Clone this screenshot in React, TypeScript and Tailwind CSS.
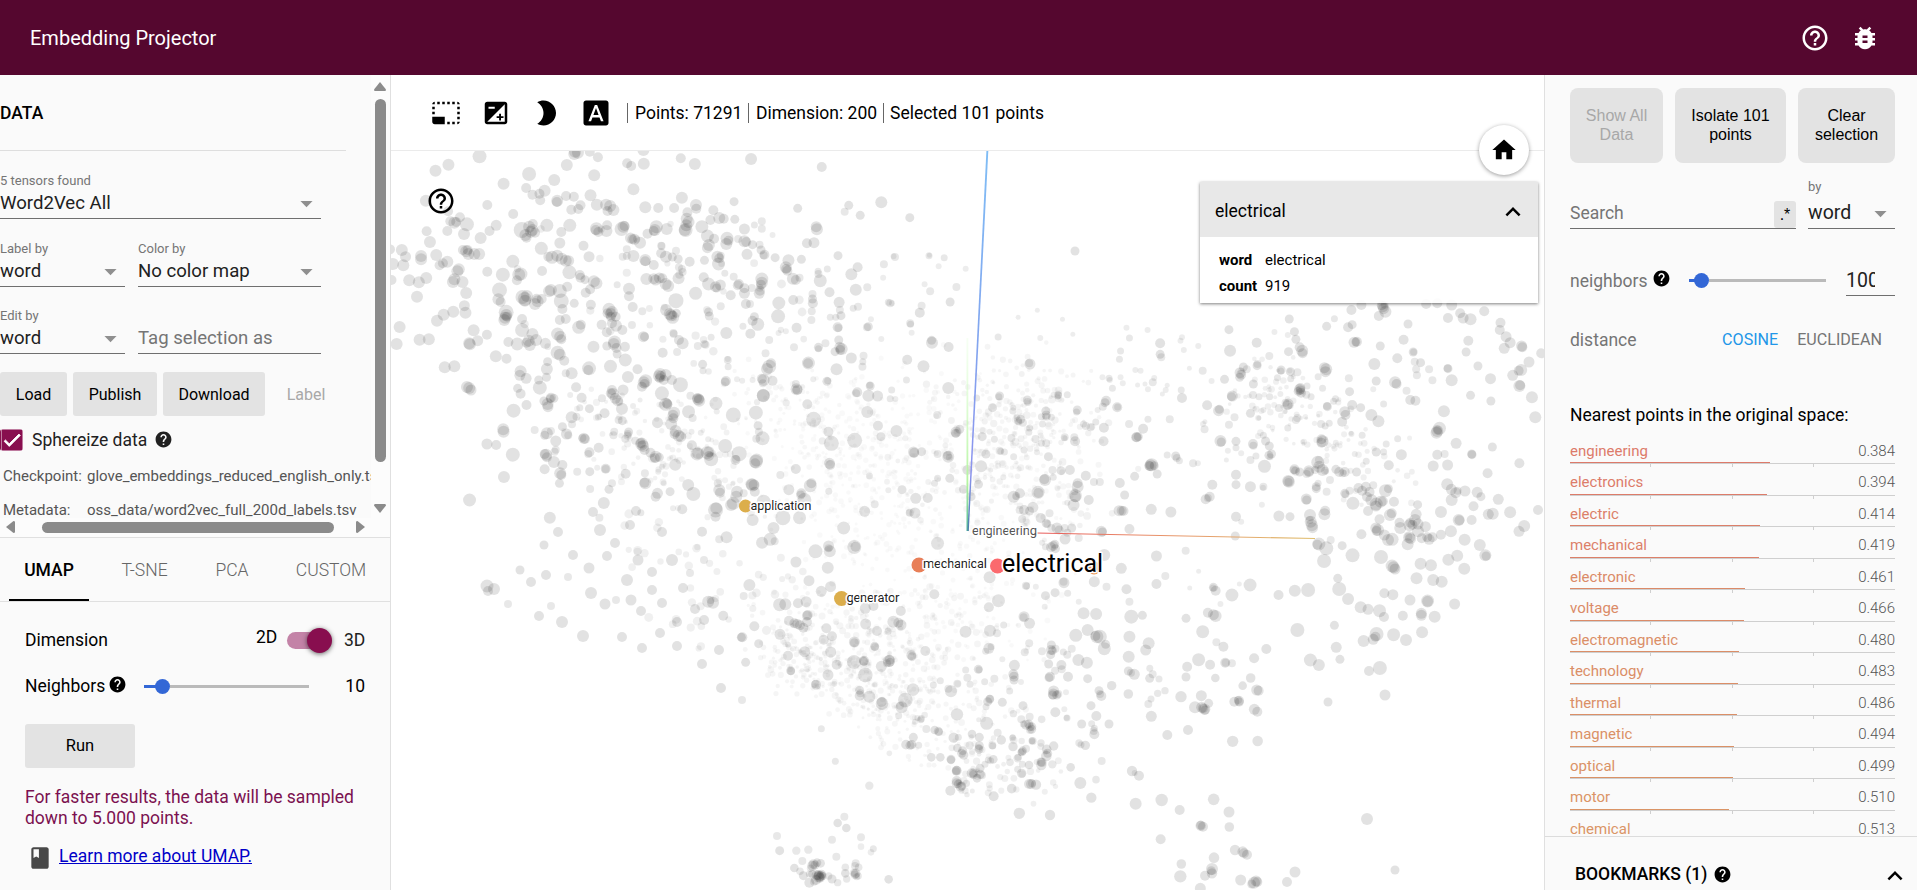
import type { ReactNode } from 'react';
import {
  MdArrowDropDown,
  MdBook,
  MdBrightness2,
  MdBugReport,
  MdCheck,
  MdExposure,
  MdFontDownload,
  MdHelp,
  MdHelpOutline,
  MdHome,
  MdKeyboardArrowUp,
  MdPhotoSizeSelectSmall,
} from 'react-icons/md';

type Dot = { x: number; y: number; r: number; o: number };

/** A batch of projected points: "x y r" triples in units of the batch's own grid. */
type Batch = { ox: number; oy: number; sx: number; sy: number; data: string };

const batches: Batch[] = [
  {
    ox: 390, oy: 150, sx: 2.703, sy: 3,
    data: `242 19 7 158 44 6 123 62 6 500 5 6 508 8 6 498 12 6 540 5 5 562 22 5 478 45 6 376 72 7 307 101 6 444 90 6 552 76 6 685 0 6 686 41 6 641 40 5 652 48 5 786 25 5 824 42 6 976 27 6 1167 51 5 658 118 6 97 152 6 157 184 5 368 114 5 418 122 6 385 134 5 404 131 5 406 151 5 452 152 6 451 156 5 476 138 5 497 140 5 542 136 6 559 164 6 584 164 6 595 168 6 604 180 6 588 183 5 490 179 5 515 166 5 509 177 5 263 165 5 333 192 5 690 172 6 725 174 5 789 143 6 768 174 5 827 165 6 828 176 5 804 187 5 874 181 5 930 155 4.5 1102 175 4.5 1240 166 4.5 1229 185 4 1271 196 4.5 1328 157 6 1405 203 4.5 1152 230 5.5 1154 238 6 1146 278 5.5 1127 280 5
189 202 5 174 218 6 179 216 5 208 223 7 163 214 5 155 243 5 200 252 6 287 226 5.5 269 243 5 99 244 5 108 276 6 245 264 6 125 315 6 84 318 6 84 328 6 32 300 6 42 320 5.5 36 346 6 8 342 6 0 298 5 4 390 5 52 391 6 78 397 6 98 384 6 155 335 6 143 340 5 134 346 5 206 304 6 212 312 6 228 312 6 241 312 6 197 300 5 210 300 5 186 358 6 182 364 6 174 388 6 196 396 6 170 396 6 206 429 6 201 467 5.5 204 488 6 171 485 6 145 494 6 127 512 6 73 440 6 26 531 6 18 582 6 80 569 6 105 568 6 226 541 6 262 554 5 214 580 6 216 583 6 237 572 5.5 148 652 6 174 649 6 286 619 6 315 626 5 208 711 6 214 714 6 219 720 5.5 345 715 4.5 353 731 5 405 713 7 334 782 7 369 765 5 306 838 6 307 845 6 262 882 5.5 287 885 5 332 914 7 308 981 6 215 1050 6.5
356 240 8 376 230 6 385 240 6 381 245 6 366 255 6 369 263 5 392 248 5 386 222 5 424 226 6.5 463 246 5 486 226 6.5 459 279 5.5 409 295 6.5 523 287 5 538 320 5.5 558 236 6.5 563 246 5 556 240 5 585 243 6 587 226 5 626 237 7 631 230 6 634 228 5 650 264 5.5 661 268 5.5 655 268 5 676 278 6 720 230 6.5 716 240 6 713 243 5 748 237 6 696 251 5 802 206 6 807 216 6 801 226 6 799 240 7 797 240 6 843 230 6.5 858 258 6.5 876 266 5 862 285 6 858 293 5.5 911 265 6.5 909 282 6 915 272 5 890 204 6 902 206 5 866 210 5 932 208 4.5 958 237 5.5 985 225 3.5 1005 214 4 1005 236 4 1034 255 3 958 274 6 963 276 5 941 267 4 980 284 4.5 999 284 4 1003 300 4.5 1012 314 5 1010 316 4 1041 323 4.5 1077 331 6 1070 352 6 1071 357 5 1074 362 5 965 313 5.5
332 334 6.5 305 374 7 348 374 6.5 354 372 6.5 343 391 5 263 365 5 411 363 5 296 420 7.5 293 448 6 299 456 5 314 487 7.5 314 495 6 311 503 6 309 510 6 316 500 5 358 441 7 364 447 7 365 452 6 370 438 6 396 446 5 392 462 6 399 454 6 410 447 5 430 424 6 435 420 6 459 423 7 463 453 7.5 479 410 5 498 460 4.5 466 477 5 459 510 5 475 507 5 543 464 5 357 507 5 357 540 7 385 552 6 375 572 6 378 585 6 395 570 6 369 578 5 344 582 6.5 320 576 5 420 580 5.5 453 552 6.5 460 560 6 463 568 5 453 608 7 459 614 6 471 632 5 510 532 6.5 516 524 5 438 322 6.5 452 317 6 464 326 6 475 332 6 483 332 5.5 428 320 5 485 367 7 513 375 5 515 383 5 527 389 4.5 551 394 6 558 400 6 541 418 5 529 428 5 614 404 3.5 646 416 6 646 439 5 592 478 6.5 600 486 6 597 492 6 588 490 5 610 500 5 597 500 5 600 520 5 611 527 6 628 540 5 586 547 5 572 524 5 550 590 6 607 576 6.5 605 582 6 612 594 5 635 590 5 586 588 4.5 614 612 4.5 636 630 6.5 596 649 6.5 538 655 7 536 660 5 491 670 6 475 670 4 669 658 5 643 681 6 685 560 5.5 688 560 4.5 682 484 4 656 471 5 654 525 4
640 318 4 658 318 6 640 298 4 629 320 4 690 330 6 690 334 5 713 345 5 733 310 5 746 320 6 763 321 4.5 779 327 4.5 773 302 4 733 287 4 810 335 5 850 331 4.5 885 320 6 890 325 5 888 342 6.5 894 317 4 781 352 4 789 357 4 791 366 4 780 385 6 782 374 4 693 387 6 713 386 5.5 718 390 5.5 728 384 5.5 736 385 5 745 402 6 752 408 6 848 382 5 861 402 6.5 880 410 5.5 883 414 4.5 893 405 5.5 826 430 6.5 921 436 5 773 452 7.5 746 480 6 756 492 6 764 502 6.5 760 496 6 774 490 4.5 861 486 4.5 863 498 4.5 894 469 4 905 370 3.5 929 380 4 943 402 5 940 406 5 958 415 5 958 430 5.5 978 414 4 1005 387 6.5 1005 398 6 1003 404 5 1000 422 5 998 430 5.5 962 462 5 973 462 4 985 500 4.5 994 523 6.5 980 512 5 954 529 3.5 974 551 5 909 549 6 868 562 3.5 850 582 4 853 584 4 832 588 4 776 606 4 791 580 6 781 570 5 766 549 4 767 552 4 737 608 5 845 643 4.5 846 662 3.5 785 704 7.5 762 690 5 745 675 6 730 672 6 727 678 6 732 679 5.5 729 685 5 740 690 5 691 692 6.5 686 697 6 688 702 5 681 710 5 735 730 7 745 763 6.5 748 760 5 750 763 5 835 746 5 833 748 6 836 752 6 830 745 5 812 737 4 881 760 6.5
1051 459 6.5 1049 499 7 1089 386 6 1097 390 5 1107 383 4 1112 328 4.5 1157 364 3.5 1163 392 6.5 1158 372 4 1211 317 4.5 1188 427 5 1182 357 3.5 1142 432 4 1142 447 4.5 1143 460 5 1140 484 4 1139 510 4 1090 450 5 1247 373 6 1264 352 5 1290 412 4 1259 419 6 1335 343 4 1365 321 4 1361 319 3 1333 383 3 1457 317 3.5 1458 316 2.5 1483 349 3 1498 323 3.5 1531 411 4 1514 456 4.5 1556 356 3 1460 424 4 1445 403 3 1437 467 4 1432 488 5 1406 520 4 1407 523 3.5 1410 548 3 1347 457 3.5 1352 460 4 1357 460 3 1293 530 4.5 1289 532 4 1300 508 3 1265 470 4 1252 475 3.5 1214 457 5.5 1216 480 4 1219 497 4.5 1210 532 5 1212 534 4 1205 502 3.5 1190 502 3.5 1213 570 4.5 1216 592 5.5 1221 597 6 1217 600 5 1203 605 4.5 1158 592 4.5 1158 596 3.5 1177 580 4 1247 624 5.5 1280 617 4 1278 635 3.5 1277 650 4 1207 658 6 1131 639 6.5 1130 640 5 1092 592 4 1099 533 5 1070 544 3 1025 570 4 1015 610 4 1464 571 4.5 1465 578 6 1510 591 5 1398 629 5 1442 649 6 1328 567 3 1509 714 6 1396 690 3.5 1298 708 4.5 1297 706 3.5 1263 727 5 1260 730 4 1293 737 6 1318 738 5.5 1356 720 3.5 1352 746 3.5 1366 747 3 1181 694 4.5 1183 692 3.5 1144 688 3 1099 718 6 1101 719 5 1098 720 4 1097 702 4 1010 690 6 1005 686 5 1034 692 5 1025 650 7 1019 657 6 1030 640 5 1009 737 6.5 1008 700 4 913 630 4 913 627 3 914 650 3.5 908 693 5 906 696 4.5 938 688 3 952 692 3 980 690 3
600 720 5 603 732 6 609 745 5.5 615 752 5.5 620 755 4 627 776 6 597 730 5 630 720 5.5 573 745 4 657 768 3 676 750 2.5 563 801 3.5 580 790 5 539 776 4.5 513 773 3.5 503 712 5 518 743 5 487 735 3 435 743 5 433 746 4.5 443 745 4.5 426 762 6 427 770 5.5 416 753 4.5 402 690 4.5 424 657 6 423 682 4.5 353 664 6 351 676 5.5 368 685 5.5 426 635 4.5 491 802 6 466 830 4.5 504 800 4 492 823 4 477 852 5.5 482 856 4 424 850 6 418 856 4.5 435 843 4 391 840 4 448 873 5.5 448 899 4 524 865 5.5 527 867 5 520 864 4 564 893 5 539 907 5 536 912 4 422 914 6 418 912 5 424 922 5 443 936 6 445 905 4 466 945 5 418 958 5 460 970 6 463 975 5 458 1000 4.5 432 1103 6 506 965 4 540 965 4.5 583 956 5 583 957 4 560 953 3 637 971 5 600 1000 4 592 1018 4.5 541 1017 4 578 1059 6 566 1103 4 606 845 4 604 856 4 628 812 4.5 618 810 4 645 846 4.5 643 852 4 642 857 4 636 866 4 680 882 6.5 678 880 5 684 888 6 681 884 4 688 900 5 663 872 4 718 920 6 716 924 5 728 922 4.5 704 908 5 771 944 6 689 970 4 690 1000 6 688 998 5 725 965 3 735 950 3 723 818 5.5 768 788 6 765 796 5.5 766 805 5 760 822 6 772 843 6 780 857 6 786 860 5.5 769 852 5 807 785 6.5 818 804 4 815 845 3 840 848 3 816 886 5 860 868 3 830 912 6.5 833 910 6 857 908 6.5 862 905 5.5 868 928 7 862 918 5 928 795 7.5 989 788 7 1009 736 6.5 906 888 7 944 911 7.5 989 935 7 991 930 6.5 987 940 5 934 930 5 935 927 4 1007 865 7 990 866 4 995 827 4.5 997 845 4 1145 808 7.5 1193 880 7.5 1256 871 7.5 1290 786 6 1319 827 5 1327 860 4.5 1369 843 6 1415 906 5.5 1417 908 5 1437 905 4.5 1509 920 6 1507 917 4.5 1512 922 3.5 1480 912 4 1530 846 5.5 1529 850 4.5 1540 838 4.5 1479 795 4 1188 940 5.5 1190 945 5 1128 763 5 1185 845 5 1097 957 5 1055 975 4 1136 1007 6.5 1139 1000 5 1078 1019 5.5 1112 1030 5 1110 1035 4.5 1120 1050 7 1186 1024 3.5 1296 978 3.5 1347 1021 3 1384 1019 4.5 1421 1045 5.5 1480 985 3.5 1472 1000 3.5 1513 985 4.5 1550 1018 4.5 1283 1084 5.5 1419 1089 5.5 980 1005 6.5 977 1003 6 984 1005 5.5 986 1025 5 938 1025 6 936 1040 6 928 1060 6.5 922 1065 6 956 1030 4 880 1080 7.5 882 1075 6 880 1100 5 820 1032 7 806 1005 6 890 1020 6 892 1028 5 886 1000 4 757 1025 4.5 740 1000 3 723 1030 5.5 718 1040 5 665 1083 5 678 1088 3.5 765 1075 3 790 1078 5 1010 1055 7 1062 1103 7.5 1107 1103 6.5`,
  },
  {
    ox: 960, oy: 300, sx: 2.703, sy: 3,
    data: `1058 30 5 1085 15 5 1132 48 5 1143 20 5.5 1145 26 5.5 1150 35 6 1140 16 5 1148 14 4 1260 12 5 1290 10 5 1329 15 5.5 1319 54 5 1352 40 5 1360 54 5.5 1380 58 6 1417 34 5 1461 68 5 1459 90 5 1476 110 5.5 1487 128 5.5 1471 145 5.5 1518 138 5.5 1520 142 5 1571 160 5 1538 186 5.5 1517 210 6 1510 212 5 1494 226 5.5 1512 258 6 1514 256 5 1546 292 6 1555 352 6 1434 236 5.5 1400 198 4.5 1368 156 4.5 1374 122 5 1319 206 4.5 1318 205 4 1329 241 6 1380 286 4.5 1435 303 4.5 1308 334 6 1296 385 6.5 1290 393 6 1288 398 6 1291 391 4.5 1341 430 5.5 1439 441 4.5 1310 462 4 1290 464 5 1279 498 5.5 1318 495 5.5 1383 462 4.5 1384 464 4.5 1512 490 5 1426 520 5 890 57 4.5 991 79 4.5 1012 56 3.5 1049 82 5 1060 74 4.5 1065 127 5.5 1073 125 5 1070 126 4.5 1211 72 4.5 1199 119 5 1136 138 4.5 1225 156 4.5 1226 156 3.5 1182 175 5 1120 192 6 1229 185 4 1245 188 4.5 1233 208 4 1235 226 4 1268 208 4 1277 241 4 1176 247 6 1180 252 5 1125 243 4.5 1051 235 4 1053 275 4.5 1117 268 3 1207 272 4 1217 300 5 1231 302 5 1145 312 3.5 727 89 4.5 730 152 6 802 128 5 850 96 3 836 168 4 886 105 3 904 95 4.5 908 118 4.5 918 142 5 925 152 6 926 160 5 888 155 4.5 803 197 4.5 804 192 4 766 201 4.5 757 218 5.5 760 224 5 756 232 4.5 775 208 4 715 238 4.5 656 212 4 680 243 3 644 138 3 541 130 5 541 163 4.5 544 172 4 600 112 3 596 122 3 605 150 3 450 83 3 458 114 3.5 507 90 3 434 153 3.5 431 178 3.5 474 210 3 189 192 5.5 187 190 4 103 111 3.5 217 114 3 209 31 2.5 157 52 2.5 277 58 2.5 305 103 2.5 985 203 5.5 990 208 6 988 215 5.5 968 230 3.5 868 210 4.5 867 213 3.5 893 215 4.5 912 217 4 894 236 3.5 858 233 3.5 918 268 5.5 920 270 4.5 920 264 5 914 274 4.5 922 278 5 938 258 3.5 936 284 4 949 290 3.5 980 265 3.5 736 288 5.5 734 290 4.5 793 252 4.5 792 285 4 808 290 3.5 837 290 3.5 866 282 3 887 312 5.5 885 316 5 880 308 4 862 324 4 699 332 5.5 701 328 4.5 668 316 5 661 388 4 657 372 3 662 365 2.5 742 352 4 727 374 4 785 340 4.5 806 354 3 808 354 2.5 820 330 3 908 360 4 912 354 4 886 384 3.5 993 320 4.5 992 318 4 1010 304 3.5 1015 296 3.5 1040 335 5.5 1042 345 5 1033 365 5 1060 315 5 1083 323 4.5 1112 345 6 1131 364 6 1058 402 3 1057 400 2.5 1087 406 3.5 1183 416 3.5 1152 432 3.5 1125 456 4.5 1145 456 3.5 1193 464 5.5 1159 496 5 1098 484 3.5 1067 462 3 977 418 5 980 424 6 977 428 5 1016 428 3 976 372 4 987 378 3.5 998 370 3.5 704 423 6 706 426 4.5 746 424 4.5 746 443 3.5 792 432 5 793 437 4 820 406 3.5 826 423 4.5 836 438 4.5 842 462 4.5 835 466 4.5 838 470 3.5 800 468 3.5 760 460 3 724 452 3 720 480 2.5 785 480 4 823 499 6.5 682 554 5 746 524 5 746 554 4.5 785 560 5.5 820 560 4 819 563 3 675 590 5 664 598 5 670 594 4 746 650 5 760 665 3 816 614 3 904 508 5 907 513 4.5 902 510 4 918 516 4.5 887 543 6 889 545 6 888 546 4 943 512 5.5 943 517 5 937 522 4 967 487 6.5 971 500 6 980 510 6 960 510 4 970 480 4 987 512 4 1016 508 4.5 1025 516 5 1040 516 5 1034 520 4 1072 516 4.5 963 560 4.5 963 566 4.5 968 550 3.5 1000 540 4 991 575 4 936 597 5.5 937 600 4.5 946 645 6 985 643 6 987 632 5 948 665 6 951 676 6 953 683 5.5 945 660 4 862 648 5.5 892 650 4.5 1040 580 4.5 1042 583 4 1053 572 4 1062 610 6.5 1077 564 5 1087 572 5 1097 560 5 1107 576 5 1100 590 5 1112 600 6 1117 556 4 1125 612 6.5 1124 618 5.5 1137 605 6 1143 604 5 1150 572 6.5 1158 566 4.5 1173 605 5 1103 633 5 1162 645 6 1167 640 5 1188 668 5 1190 684 6 1134 658 5 1124 684 5.5 1130 690 6 1126 693 5 1147 705 5.5 1157 720 6 1168 718 6.5 1215 676 6 1230 660 6 1233 643 5.5 1217 668 5 1223 674 5 1238 672 5.5 1258 680 5.5 1238 694 6 1214 712 6 1218 716 5.5 1210 733 6 1212 710 4 1248 715 5 1263 712 5 1268 718 5.5 1277 712 5 1300 704 5 1327 694 6 1348 660 6 1350 661 5 1383 660 5 1300 636 6 1317 553 6 1328 568 5.5 1340 578 5.5 1365 573 5.5 1329 600 6 1345 572 4 1398 577 5.5 1408 590 4.5 1388 619 5 1428 643 5.5 1440 641 6 1455 598 5.5 1487 637 6 1525 678 6 1511 694 5.5 1364 719 6 1405 735 6 1420 766 6 1422 768 4.5 1344 767 6 1320 779 6 1363 806 6 1245 791 6 1273 796 6 1234 835 6 1279 840 6 1302 845 6 1138 771 7 1168 798 6.5 1172 802 6 1176 807 5.5 1061 766 7 990 745 7 970 732 6.5 966 734 5 1002 720 4 1033 737 4.5 1085 703 5 984 783 7 784 855 6.5 735 885 6.5 861 885 5 905 872 6 941 870 7 1021 835 4.5 1025 867 7 1049 897 6 1083 922 6 1103 928 5.5 1134 932 6.5 1146 951 5 1147 880 5 1170 884 5.5 1264 903 6.5 1264 904 5.5 1337 912 5.5 1247 940 5.5 1247 946 5.5 1283 950 6 1197 947 5 1012 976 4.5 1126 1002 7 1123 1010 5 1172 1004 6.5 1249 997 6 1091 1023 6 1117 1018 5.5 912 990 7 1017 1042 5.5 1027 1078 4.5 947 1080 6.5 970 1095 6 1135 1104 7 656 995 6.5 611 955 4.5 670 938 5 685 944 5.5 691 948 6 704 912 3 693 1027 4 712 1040 5 828 1047 5 795 1075 5 645 1079 6.5 676 1094 5 717 1088 5 718 1088 4 735 1090 4 614 1100 5 685 862 4.5 691 872 5 684 864 3.5 755 852 2.5 621 864 2.5 645 814 2.5 555 828 4 531 768 5.5 531 852 5 610 752 4 450 868 5 458 905 4 436 805 5.5 463 950 7 493 946 4.5 458 1010 6 510 1030 6 502 1050 5.5 456 1070 6 513 1105 3.5 390 765 6 363 845 5.5 281 848 5.5 280 845 4 257 878 4.5 231 887 4.5 396 860 4 291 880 3.5 229 920 3 321 905 3 334 940 6 368 942 6 345 990 6 313 1006 6.5 378 1010 7 370 1010 6.5 366 1008 5 390 1046 6.5 302 1046 4 320 1080 6 343 1088 6 290 1064 4 247 1035 4.5 246 1050 5 250 1052 4.5 258 1046 4 274 1095 5 275 1108 4 147 1096 5.5 175 1057 4 187 1030 4 78 1045 5.5 84 1040 3.5 81 992 6 100 1000 4 15 995 6 188 970 5.5 173 950 5.5 172 952 4 104 902 6.5 78 922 5 80 832 6 178 857 4 180 858 3.5 205 860 3 118 975 3.5 70 462 4.5 57 499 6 20 510 5 83 510 2.5 50 553 4.5 30 590 4.5 117 532 3 145 590 6 162 580 5 152 588 4 211 577 6.5 212 579 5 230 540 6 228 538 5 250 510 4 273 512 4.5 297 510 5 252 532 3.5 318 550 5 318 560 6 340 527 5 362 546 4 378 546 4 310 575 3.5 312 587 6.5 312 590 5.5 307 615 6 348 600 5 290 608 3 432 549 5 445 585 4.5 472 529 4.5 533 522 4.5 518 494 6.5 515 496 6 512 498 5 513 496 4 525 497 4.5 517 628 5.5 570 636 5.5 430 632 5.5 437 632 5 442 633 5 560 465 3.5 583 468 4.5 586 474 4 593 482 3.5 630 490 4 643 490 3 478 412 5 482 410 4.5 476 412 5 495 386 5 457 372 4 508 358 3.5 567 358 4 425 322 5 426 321 3.5 395 302 5 392 308 4.5 386 320 4 372 330 3 389 383 5 388 424 5 311 424 5 309 412 4 283 412 4 282 414 3 265 286 4 266 285 3.5 253 284 3 264 290 3 290 284 3.5 182 300 4.5 183 306 4 232 333 4.5 233 345 4.5 234 350 4 247 352 3.5 220 350 3.5 223 372 3.5 143 333 3.5 144 323 3 153 350 3 157 362 4 164 358 4.5 170 368 4 159 366 3.5 188 384 3.5 186 397 3.5 204 417 4 107 288 4.5 105 290 3.5 88 323 4.5 45 294 3.5 60 410 4.5 80 395 3 93 418 3.5 107 452 4 110 454 3.5 120 456 3.5 145 470 3.5 139 414 4 233 430 4 220 430 3.5 239 470 4.5 208 457 3 173 450 3.5 334 372 3.5 340 378 4 353 382 4 367 366 3.5 317 330 4.5 315 336 3.5 600 294 5 598 270 3.5 556 270 3 547 282 2.5 525 234 3 560 256 2.5 521 247 4 508 268 3 488 212 3 500 252 2.5 480 255 2.5 440 250 3 434 232 3 412 265 3.5 403 235 3.5 405 240 3 385 232 3 620 205 2.5 161 630 4 173 630 5 197 622 5.5 188 633 4.5 168 657 4 218 654 5 242 640 4 233 670 4.5 236 672 4 247 684 4 262 684 5.5 268 690 4.5 283 684 4 302 684 4.5 290 698 4 284 717 5.5 382 694 5.5 385 696 4.5 458 687 5 321 714 4 252 738 5 256 733 4.5 246 742 5 258 746 4.5 231 740 3.5 222 728 3 744 708 4.5 1237 614 4.5`,
  },
  {
    ox: 740, oy: 620, sx: 3, sy: 3,
    data: `43 19 5 120 43 5.5 56 71 4.5 7 52 5 4 52 4.5 17 127 4.5 144 107 5 194 95 5.5 163 10 5 172 12 5 180 16 5 190 23 5 259 25 5 276 49 5 251 59 5 272 96 5.5 290 134 5 264 165 5.5 343 66 5.5 343 68 4.5 404 79 4.5 405 81 4 342 126 7 372 122 5 371 124 4.5 376 165 7.3 377 12 5.5 411 33 5 444 34 3.5 460 5 6 475 8 5 483 15 5.5 447 123 6 449 119 5 450 127 4.5 424 139 5.5 441 130 4 514 106 5 516 110 4.5 556 93 5 152 152 4.5 153 154 4 228 194 5 226 192 4 359 211 4.5 359 227 5 361 220 4 388 230 6 426 251 6.3 425 246 5 519 209 6.3 496 240 7.3 485 262 6 480 257 4 476 287 3.5 651 283 6.2 740 310 6.5 716 299 2.5 633 214 6 625 206 4 580 195 3.5 601 182 3.5 652 191 4 690 193 3.5 682 173 4 677 150 3.5 715 148 4.5 717 149 3.5 763 176 4 734 185 3.5 677 34 5.5 750 31 5.5 770 40 3.5 750 85 4.5 737 94 3.5 745 90 3.5 823 137 5 820 163 5 822 170 5 822 180 4.5 843 186 3 809 213 3.5 787 247 4.5 749 238 4.5 750 236 4 743 245 4.5 738 260 3.5 849 257 4.5 868 72 4 853 97 4 787 118 3 906 94 4 932 72 4 933 72 3 937 82 4 932 104 4.5 950 86 4 970 96 3.5 995 86 4 926 132 4.5 963 134 4.5 964 135 4 945 152 4 930 170 5 927 173 4.5 984 170 5 941 213 5.5 940 222 5.5 938 225 4.5 950 225 4.5 955 222 4 978 217 3 946 277 5 973 268 3 981 294 3.5 980 293 3 1007 46 6.3 1044 33 5.8 1065 50 6 1083 47 6.2 1074 49 5 1093 88 6.2 1097 73 4.5 1015 121 5.7 1040 129 5.5 1043 176 4.5 1115 197 4.7 1077 212 4.5 1084 228 5 1080 222 4 1053 257 4.5 1069 288 5 1055 311 3.5 1025 312 4.5 1063 325 3.5 1063 343 5 1061 333 4 1107 312 4.5 868 10 5 855 2 3.5 1168 50 6.5 1175 0 5 1166 110 6 1227 71 6.3 1215 92 5.3 1220 86 4.5 1165 153 4.5 1183 163 5.5 1173 158 4 1231 147 3.5 1238 163 4 1229 175 4.5 1257 177 3.5 1165 222 4.8 1233 237 3.5 1253 220 3.7 1275 212 3.7 1225 252 4 1234 289 5.5 1282 345 5 1388 35 6.3 1430 67 4 1451 80 5 1377 119 6.2 1342 139 4.8 1411 134 4.3 1455 128 4 1457 128 4 1474 128 4.3 1542 115 5 1338 171 4.5 1426 174 4.3 1532 174 4.8 1508 197 4.3 1550 210 5.5 1556 212 5 1323 230 5.7 1384 227 5.5 1365 262 6 1385 262 5.5 1394 268 5.7 1389 265 5 1395 270 4.5 1406 250 4.5 1483 245 5 1497 242 5 1498 246 4.5 1494 240 4 1543 268 5.5 1552 275 5 1344 330 5 1478 364 5.7 1553 363 5.3 1085 423 4 1036 376 4.7 1017 369 3.7 1023 374 3.5 992 442 4.3 1021 489 6 1068 479 3.8 1054 533 5.2 1176 453 5.2 1197 467 5 1184 459 3 1187 551 6 1265 540 6.2 1319 570 5 1421 538 5.8 1467 576 5.5 1468 621 4.8 1382 617 5.2 1382 616 4.5 1389 620 5 1262 658 5 1422 713 5.3 1485 690 5.2 1508 695 5.3 1512 700 5 1521 704 5 1416 747 6 1416 760 5.2 1414 752 4.5 1395 767 5 1324 732 4.8 1321 769 6.2 1502 780 5.5 1381 805 5.5 1542 788 6 1548 783 5.5 1552 786 5 1535 792 4.5 559 327 4 584 330 4.3 595 334 4.5 597 336 4 641 353 5.2 655 352 3.5 696 342 4.3 718 352 4.5 718 377 4.5 717 388 4.5 716 384 4 689 376 4.2 652 384 4.3 668 392 4.5 671 405 4.7 665 400 4.5 757 376 4 758 378 3.5 773 338 4 784 360 4.7 574 412 4.3 601 412 4.3 633 418 4.5 633 420 4.2 650 452 5 650 451 4.5 648 454 4 695 460 5 700 459 4.5 701 464 4.5 720 445 4.5 721 463 4.5 711 475 4.3 735 433 3.5 726 466 4 745 420 3.5 760 418 4.3 752 422 3.5 650 483 5 650 490 5 662 500 5 665 498 4.5 655 492 4.5 679 490 3.7 664 512 3 631 512 5 681 524 2.7 697 513 2.5 761 529 5 818 354 3.5 818 352 3 819 380 4.7 844 298 4 869 290 4 858 314 5 866 312 4.5 870 320 4.5 876 320 4.3 875 328 4.5 870 330 4 850 312 3.5 905 298 3.8 820 281 3.7 878 363 4 876 362 3.5 877 364 3 903 369 3.7 845 363 3.2 848 392 4.3 846 396 4.3 858 386 4 843 397 3.5 833 415 4.2 834 412 3.5 810 427 3.8 847 433 3.5 845 460 4.7 833 448 3.5 867 435 4.3 920 388 4.8 919 408 5.3 923 400 4.5 904 435 5.2 906 427 4.7 903 426 4.5 937 433 4.2 941 378 4.7 890 426 3 867 492 5 873 492 5 876 490 4 888 494 5.2 815 506 4.8 838 580 5.7 930 585 5.2 520 352 4.5 515 374 4.7 498 374 4.8 510 376 4.5 536 376 3.5 554 285 3.3 544 296 3.7 542 299 3.5 532 294 3 525 305 3 448 400 2.8 286 424 3.5 388 497 4.2 244 326 3.5 313 590 4 293 609 4.3 319 624 4.3 276 659 4 363 652 4 363 680 3.3 400 686 3.5 393 697 3.3 111 648 4 119 692 4.5 169 692 4.2 205 689 4.2 289 710 4 187 723 4 163 744 4.3 180 754 3.8 190 767 4.5 217 737 5 220 732 4.8 225 735 4.5 231 728 4.3 242 730 4.3 212 745 3.8 238 768 5.5 236 771 5.5 243 768 5 240 773 5 235 766 5 230 765 5 245 763 4.5 248 768 4 228 780 5 222 785 4 208 788 5 217 762 4.3 208 762 3.5 276 777 4.5 293 788 3.7 266 768 3.7 316 742 3.8 316 760 4.3 320 777 3.7 347 730 4 345 738 4 347 760 4.8 345 764 4.5 342 758 4 356 742 3.8 355 768 3.5 350 770 3.5 446 778 4.3`,
  },
  {
    ox: 700, oy: 450, sx: 2.45, sy: 3,
    data: `20 10 6 28 32 7 98 15 7 88 24 6 137 28 7 135 38 7 138 32 6 235 58 6 318 43 5 316 38 4 195 75 4 128 104 7.5 129 107 7 127 100 6 128 110 5 90 122 6 88 132 5 48 120 6 47 130 5 37 178 7.5 41 190 7 40 195 5 73 165 7 129 210 6 204 206 7.5 246 202 6 218 120 5.5 272 105 6 274 98 4 268 110 6 314 124 4.5 352 234 6.5 403 184 5.5 428 163 4 180 234 6 172 268 6.5 152 278 6 183 274 4 283 304 7 315 288 5.5 318 304 6 315 295 4 378 291 7 381 290 5 313 353 6 235 336 5.5 121 405 6 107 438 4 267 392 5.5 320 410 5.5 297 424 5.5 65 262 6 47 268 4 5 245 5 20 455 6 32 458 6 26 450 4 57 497 5 10 510 5 134 528 6 195 464 6.5 209 463 6 240 460 5 260 455 5.5 262 497 5 264 495 5 218 512 5 228 518 5 235 524 5.5 240 526 5 262 516 5 405 475 5.5 425 468 5 405 523 6 470 505 6.5 492 483 5 490 523 5.5 475 515 5 574 433 5 582 280 6.5 525 187 6 514 188 4 558 144 5 494 119 4.5 462 122 3.5 525 10 6 523 9 5 542 12 4 604 17 5 609 20 5 598 12 4 583 83 3 614 85 4.5 688 50 6.5 701 14 4.5 415 80 4 730 453 6.5 709 472 5 710 380 6.5 795 502 5.5 808 520 5.5 710 541 6 650 541 5 845 475 3.5`,
  },
  {
    ox: 390, oy: 0, sx: 1, sy: 1,
    data: `97 586 6.5 104 589 6 98 591 5 141 582 5 130 570 4.5 156 575 5 172 622 6 149 616 5 118 604 4 161 606 4 201 593 6 199 568 5.5 237 580 6 183 555 5 217 556 5 248 560 5.5 262 572 5 215 604 5.5 241 600 5.5 251 611 5 272 603 5 193 636 6 168 532 5 210 530 6 225 543 5 282 560 6 293 588 5 305 609 5 287 622 5 232 637 5 252 648 5 287 646 5 312 664 5 270 633 5 329 650 5 272 532 5 240 525 5 203 512 5 154 545 4.5 178 577 4 226 600 4 331 688 5 352 700 4 300 573 4 314 560 4 262 590 5 685 251 4.5 1148 510 5 1016 640 6 1020 600 5.5 979 671 5 995 695 5.5 938 702 4.5 905 872 5.5 977 819 6 1005 870 4.5 897 882 5`,
  },
];

/** Elongated clouds of distant points: centre, spread, rotation, count, radius range, opacity. */
type Cloud = [number, number, number, number, number, number, number, number, number];

const clouds: Cloud[] = [
  [1010, 450, 46, 40, 0, 190, 1.6, 3.2, 0.035],
  [1000, 465, 60, 46, 0, 80, 2.4, 4, 0.05],
  [1020, 395, 38, 26, 0, 60, 1.6, 3.2, 0.04],
  [940, 560, 60, 60, 0, 330, 1.4, 3, 0.025],
  [850, 470, 50, 40, 0, 210, 1.4, 3, 0.025],
  [870, 680, 62, 28, 0.55, 330, 1.4, 3.2, 0.035],
  [800, 660, 26, 18, 0.4, 80, 1.6, 3, 0.04],
  [900, 640, 70, 36, 0.2, 160, 2, 3.6, 0.04],
  [670, 450, 60, 24, 0.4, 90, 2, 3.6, 0.05],
  [800, 410, 50, 26, 0.3, 100, 1.5, 3, 0.03],
  [1330, 440, 50, 24, 0.5, 60, 1.8, 3.4, 0.06],
  [1280, 400, 26, 26, 0, 50, 1.8, 3.4, 0.06],
  [900, 405, 40, 36, 0, 70, 1.5, 3, 0.025],
  [700, 320, 90, 50, 0.4, 40, 3, 4.5, 0.07],
  [690, 560, 60, 40, 0.5, 50, 3, 4.6, 0.06],
  [1000, 770, 30, 18, 0, 40, 2.2, 4, 0.06],
];

function seeded(seed: number) {
  let s = seed;
  return () => {
    s = (s * 1664525 + 1013904223) >>> 0;
    return s / 4294967296;
  };
}

function buildDots(): Dot[] {
  const rnd = seeded(71291);
  const far: Dot[] = [];
  for (const [cx, cy, dx, dy, angle, count, r0, r1, o] of clouds) {
    for (let i = 0; i < count; i++) {
      const m = Math.sqrt(-2 * Math.log(1 - rnd() * 0.93));
      const t = rnd() * Math.PI * 2;
      const u = m * Math.cos(t) * dx;
      const v = m * Math.sin(t) * dy;
      far.push({
        x: cx + u * Math.cos(angle) - v * Math.sin(angle),
        y: cy + u * Math.sin(angle) + v * Math.cos(angle),
        r: r0 + rnd() * (r1 - r0),
        o,
      });
    }
  }
  // Batches overlap at their borders, so a point already held by an earlier batch is skipped.
  const near: Dot[] = [];
  for (const { ox, oy, sx, sy, data } of batches) {
    const n = data.trim().split(/\s+/).map(Number);
    const earlier = near.slice();
    for (let i = 0; i + 2 < n.length; i += 3) {
      const x = ox + n[i] / sx;
      const y = oy + n[i + 1] / sy;
      const r = n[i + 2];
      if (earlier.some((d) => Math.hypot(d.x - x, d.y - y) < 4)) continue;
      near.push({ x, y, r, o: r < 3.4 ? 0.07 : r < 4.3 ? 0.09 : 0.115 });
    }
  }
  return [...far, ...near];
}

const dots = buildDots();

const neighbors: [string, number, string][] = [
  ['engineering', 0.384, '#dd7a6a'],
  ['electronics', 0.394, '#dd7c6a'],
  ['electric', 0.414, '#dc7f69'],
  ['mechanical', 0.419, '#dc8069'],
  ['electronic', 0.461, '#db8a68'],
  ['voltage', 0.466, '#db8b68'],
  ['electromagnetic', 0.48, '#db8e67'],
  ['technology', 0.483, '#db8e67'],
  ['thermal', 0.486, '#db8f67'],
  ['magnetic', 0.494, '#da9166'],
  ['optical', 0.499, '#da9266'],
  ['motor', 0.51, '#da9466'],
  ['chemical', 0.513, '#da9566'],
];

function SelectField({ label, value, className }: { label: string; value: string; className: string }) {
  return (
    <div className={`flex shrink-0 flex-col border-b border-[#6f6f6f] ${className}`}>
      <span className="h-[18px] text-[13px] leading-[21px] text-[#757575]">{label}</span>
      <span className="flex h-[30px] items-center justify-between">
        <span className="text-[18.6px] leading-[26px] text-[#212121]">{value}</span>
        <MdArrowDropDown className="size-[29px] text-[#8f8f8f]" />
      </span>
    </div>
  );
}

function GrayButton({ children, className }: { children: ReactNode; className: string }) {
  return (
    <button className={`flex h-11 shrink-0 items-center justify-center rounded-[3px] pt-[2px] text-[16px] ${className}`}>
      {children}
    </button>
  );
}

function Slider({ width, value, className }: { width: string; value: string; className: string }) {
  return (
    <div className={`flex h-4 shrink-0 items-center ${width} ${className}`}>
      <div className={`h-[3px] bg-[#3367d6] ${value}`} />
      <div className="-ml-px size-[15px] shrink-0 rounded-full bg-[#3367d6]" />
      <div className="h-[3px] grow bg-[#bababa]" />
    </div>
  );
}

function DataPanel() {
  return (
    <section className="flex h-[463px] shrink-0 flex-col border-b border-[#e0e0e0]">
      <div className="flex h-[443px]">
        <div className="flex w-[371px] flex-col overflow-hidden">
          <div className="flex h-[76px] w-[346px] shrink-0 items-center border-b border-[#dedede] pt-[2px] text-[17.5px] font-medium text-black">
            DATA
          </div>
          <SelectField label="5 tensors found" value="Word2Vec All" className="mt-[19px] w-[321px]" />
          <div className="mt-[19px] flex gap-[13px]">
            <SelectField label="Label by" value="word" className="w-[125px]" />
            <SelectField label="Color by" value="No color map" className="w-[183px]" />
          </div>
          <div className="mt-[18px] flex gap-[13px]">
            <SelectField label="Edit by" value="word" className="w-[125px]" />
            <div className="flex w-[183px] items-end border-b border-[#6f6f6f] pb-[2px] text-[18.6px] leading-[26px] text-[#757575]">
              Tag selection as
            </div>
          </div>
          <div className="mt-[18px] flex shrink-0 gap-[6px]">
            <GrayButton className="w-[67px] bg-[#e3e3e3] text-black">Load</GrayButton>
            <GrayButton className="w-[84px] bg-[#e3e3e3] text-black">Publish</GrayButton>
            <GrayButton className="w-[102px] bg-[#e3e3e3] text-black">Download</GrayButton>
            <GrayButton className="w-[70px] text-[#a8a8a8]">Label</GrayButton>
          </div>
          <div className="mt-[13px] flex h-[22px] shrink-0 items-center text-[17.5px] text-[#212121]">
            <span className="flex h-[22px] w-[23px] items-center justify-center rounded-[3px] bg-[#880e4f]">
              <MdCheck className="size-[22px] stroke-white stroke-1 text-white" />
            </span>
            <span className="ml-[9px]">Sphereize data</span>
            <MdHelp className="mb-[2px] ml-[7px] size-[19px]" />
          </div>
          <div className="mt-[14px] flex h-[22px] shrink-0 items-center pl-[3px] text-[15px] whitespace-nowrap text-[#555]">
            <span className="w-[84px] shrink-0">Checkpoint:</span>
            <span>glove_embeddings_reduced_english_only.tsv</span>
          </div>
          <div className="mt-[12px] flex h-[22px] shrink-0 items-center pl-[3px] text-[15px] whitespace-nowrap text-[#555]">
            <span className="w-[84px] shrink-0">Metadata:</span>
            <span>oss_data/word2vec_full_200d_labels.tsv</span>
          </div>
        </div>
        <div className="flex w-[19px] flex-col items-center bg-[#fcfcfc] pt-[7px] pr-px pb-[5px]">
          <svg viewBox="0 0 12 9" className="h-[9px] w-3 shrink-0"><path d="M6 0 12 7.5Q12 9 11 9H1Q0 9 0 7.5Z" fill="#8b8b8b" /></svg>
          <div className="mt-2 h-[363px] w-[11px] shrink-0 rounded-full bg-[#8b8b8b]" />
          <svg viewBox="0 0 12 9" className="mt-auto h-[9px] w-3 shrink-0"><path d="M6 9 12 1.5Q12 0 11 0H1Q0 0 0 1.5Z" fill="#8b8b8b" /></svg>
        </div>
      </div>
      <div className="flex h-[19px] items-center bg-[#fcfcfc] pb-px pl-[6px]">
        <svg viewBox="0 0 9 12" className="h-3 w-[9px]"><path d="M0 6 7.5 12Q9 12 9 11V1Q9 0 7.5 0Z" fill="#8b8b8b" /></svg>
        <div className="ml-[27px] h-[11px] w-[292px] rounded-full bg-[#8b8b8b]" />
        <svg viewBox="0 0 9 12" className="ml-[22px] h-3 w-[9px]"><path d="M9 6 1.5 12Q0 12 0 11V1Q0 0 1.5 0Z" fill="#8b8b8b" /></svg>
      </div>
    </section>
  );
}

function ProjectionPanel() {
  return (
    <section className="flex flex-col text-[17.5px] text-black">
      <div className="flex h-16 items-end border-b border-[#e0e0e0] pl-[9px] font-light text-[#666]">
        <span className="flex h-[63px] w-20 shrink-0 items-center justify-center border-b-2 border-black pt-[4px] font-medium text-black">UMAP</span>
        <span className="flex h-[63px] w-[111px] shrink-0 items-center justify-center pt-[2px]">T-SNE</span>
        <span className="flex h-[63px] w-[64px] shrink-0 items-center justify-center pt-[2px]">PCA</span>
        <span className="flex h-[63px] w-[134px] shrink-0 items-center justify-center pt-[2px]">CUSTOM</span>
      </div>
      <div className="mt-[26px] flex h-6 items-center pl-[25px]">
        <span className="w-[231px] pt-px">Dimension</span>
        <span className="mb-[5px] w-[31px]">2D</span>
        <span className="flex h-[17px] w-[45px] items-center justify-end rounded-full bg-gradient-to-r from-[#c383a7] from-85% to-transparent to-85%">
          <span className="size-[25px] rounded-full bg-[#880e4f] shadow-[0_1px_5px_rgba(0,0,0,0.6)]" />
        </span>
        <span className="ml-3 pt-px text-[#212121]">3D</span>
      </div>
      <div className="mt-[22px] flex h-6 items-center pl-[25px]">
        <span className="pt-px">Neighbors</span>
        <MdHelp className="mb-[3px] ml-[3px] size-[19px]" />
        <Slider width="w-[165px]" value="w-3" className="ml-[17px]" />
        <span className="ml-auto pt-px pr-[25px]">10</span>
      </div>
      <button className="mt-[26px] ml-[25px] h-11 w-[110px] rounded-[3px] bg-[#e3e3e3] pt-px text-[16.5px]">Run</button>
      <p className="mt-[19px] ml-[25px] w-[345px] leading-[21.4px] text-[#7b1150]">
        For faster results, the data will be sampled
        <br />
        down to 5.000 points.
      </p>
      <div className="mt-[12px] flex items-center pl-[27px]">
        <MdBook className="mt-[3px] size-[26px] text-[#484848]" />
        <a className="ml-[6px] text-[#0000c8] underline">Learn more about UMAP.</a>
      </div>
    </section>
  );
}

function Toolbar() {
  return (
    <div className="flex h-[76px] shrink-0 items-center border-b border-[#ebebeb] bg-white pl-10 text-black">
      <div className="flex gap-5">
        <MdPhotoSizeSelectSmall className="size-[30px]" />
        <MdExposure className="size-[30px]" />
        <MdBrightness2 className="size-[30px]" />
        <MdFontDownload className="size-[30px]" />
      </div>
      <div className="ml-4 flex text-[17.5px] leading-5">
        <span className="w-[121px] border-l border-[#666] pl-[7px]">Points: 71291</span>
        <span className="w-[135px] border-l border-[#666] pl-[7px]">Dimension: 200</span>
        <span className="border-l border-[#666] pl-[6px]">Selected 101 points</span>
      </div>
    </div>
  );
}

function Scatter() {
  return (
    <svg viewBox="391 151 1153 739" className="h-[739px] w-[1153px]" fontFamily="Roboto, sans-serif">
      <g fill="#000">
        {dots.map((d, i) => (
          <circle key={i} cx={d.x} cy={d.y} r={d.r} fillOpacity={d.o} />
        ))}
      </g>
      <defs>
        <linearGradient id="axis-x" x1="0" x2="1"><stop stopColor="#e85a5a" /><stop offset=".45" stopColor="#e8936a" /><stop offset="1" stopColor="#e0bf70" /></linearGradient>
        <linearGradient id="axis-y" x1="0" x2="0" y1="0" y2="1" gradientUnits="objectBoundingBox"><stop stopColor="#d5ffc8" stopOpacity=".2" /><stop offset=".75" stopColor="#b5f5a0" /><stop offset="1" stopColor="#4fb89a" /></linearGradient>
        <linearGradient id="axis-z" x1="0" x2="0" y1="0" y2="1" gradientUnits="objectBoundingBox"><stop stopColor="#80bdf5" /><stop offset=".5" stopColor="#82a5ef" /><stop offset=".85" stopColor="#8c93ee" /><stop offset="1" stopColor="#4a7fa8" /></linearGradient>
      </defs>
      <path d="M966.5 338h1.8V531h-1.8z" fill="url(#axis-y)" />
      <path d="M986.4 151h1.9L968.8 531h-1.4z" fill="url(#axis-z)" />
      <path d="M1036 532.4 1315 538v1.1L1036 533.5z" fill="url(#axis-x)" />
      <g>
        <circle cx="745.5" cy="506" r="6.5" fill="#dcae4c" />
        <circle cx="919" cy="565" r="7.5" fill="#e87f58" />
        <circle cx="841.5" cy="598.5" r="7.5" fill="#dcae4c" />
        <circle cx="997.5" cy="566" r="7.5" fill="#fb6a6e" />
        <circle cx="1094" cy="568" r="6.5" fill="#e89250" />
      </g>
      <g fill="#222" stroke="#fff" strokeWidth="3" strokeLinejoin="round" paintOrder="stroke" fontSize="13">
        <text x="750.5" y="510" textLength="61">application</text>
        <text x="972" y="534.5" fill="#555" textLength="65">engineering</text>
        <text x="923" y="568" textLength="64">mechanical</text>
        <text x="846.5" y="602" textLength="53">generator</text>
        <text x="1002" y="571.5" fill="#000" fontSize="25">electrical</text>
      </g>
    </svg>
  );
}

function MetadataCard() {
  return (
    <div className="absolute top-[107px] left-[809px] w-[338px] bg-white/90 text-black shadow-[0_1px_3px_rgba(0,0,0,0.5)]">
      <div className="flex h-[55px] items-center justify-between bg-[#e8e8e8] pt-[4px] pr-[10px] pl-[15px] text-[17.5px]">
        electrical
        <MdKeyboardArrowUp className="size-[30px]" />
      </div>
      <div className="grid h-[66px] grid-cols-[46px_1fr] content-start gap-y-[6px] pt-[13px] pl-[19px] text-[15px] leading-5">
        <b className="font-bold">word</b>
        <span>electrical</span>
        <b className="font-bold">count</b>
        <span>919</span>
      </div>
    </div>
  );
}

function Inspector() {
  return (
    <aside className="flex w-[373px] shrink-0 flex-col border-l border-[#e0e0e0] bg-[#fafafa]">
      <div className="flex h-[762px] flex-col overflow-hidden border-b border-[#dcdcdc] pr-[22px] pl-[25px]">
        <div className="mt-[13px] flex h-[75px] shrink-0 gap-3 font-['Liberation_Sans',sans-serif] text-[16px] leading-[19px] text-black">
          <button className="w-[93px] rounded-[8px] bg-[#e3e3e3] pb-px text-[#a8a8a8]">Show All<br />Data</button>
          <button className="w-[111px] rounded-[8px] bg-[#e3e3e3] pb-px">Isolate 101<br />points</button>
          <button className="w-[97px] rounded-[8px] bg-[#e3e3e3] pb-px">Clear<br />selection</button>
        </div>
        <div className="mt-[14px] flex h-[52px] shrink-0 items-end gap-3">
          <div className="flex h-[28px] w-[226px] items-center justify-between border-b border-[#6f6f6f] text-[17.5px] text-[#757575]">
            <span className="pb-[3px]">Search</span>
            <span className="flex h-[27px] w-[22px] items-center justify-center rounded-[3px] bg-[#e3e3e3] font-['Liberation_Sans',sans-serif] text-[16px] text-black">.*</span>
          </div>
          <div className="flex h-[52px] w-[87px] flex-col border-b border-[#6f6f6f]">
            <span className="h-[20px] text-[13px] leading-[20px] text-[#757575]">by</span>
            <span className="flex h-[31px] items-center justify-between pt-px text-[19.5px] text-[#212121]">
              word
              <MdArrowDropDown className="size-[29px] text-[#8f8f8f]" />
            </span>
          </div>
        </div>
        <div className="mt-[35px] flex h-8 shrink-0 items-center text-[17.5px] text-[#757575]">
          <span className="pt-[2px]">neighbors</span>
          <MdHelp className="mb-[4px] ml-[5px] size-[19px] text-black" />
          <Slider width="w-[137px]" value="w-[6px]" className="ml-[18px]" />
          <span className="ml-auto flex h-8 w-[49px] items-center border-b border-[#6f6f6f] pt-[2px] text-[19.5px] text-[#212121]">
            <span className="w-[29px] overflow-hidden">100</span>
          </span>
        </div>
        <div className="mt-[32px] flex h-6 shrink-0 items-center text-[17.5px] text-[#757575]">
          distance
          <span className="ml-auto text-[16.1px] text-[#2196e8]">COSINE</span>
          <span className="mr-[13px] ml-[19px] text-[16.1px]">EUCLIDEAN</span>
        </div>
        <div className="mt-[51px] h-6 shrink-0 text-[17.5px] leading-6 text-black">Nearest points in the original space:</div>
        <div className="mt-[13px] flex shrink-0 flex-col">
          {neighbors.map(([word, distance, color]) => (
            <div key={word} className="flex h-[31.5px] shrink-0 flex-col text-[15px]">
              <div className="flex h-[22px] items-center justify-between">
                <span style={{ color }}>{word}</span>
                <span className="font-light text-[#555]">{distance.toFixed(3)}</span>
              </div>
              <div className="h-[2px] shrink-0 bg-linear-to-b from-transparent from-50% to-[#cfcfcf] to-50%">
                <div className="h-px" style={{ width: `${(1 - distance) * 100}%`, background: color }} />
              </div>
              <div className="grid h-[3px] grid-cols-4 divide-x divide-[#cfcfcf]">
                <i /><i /><i /><i />
              </div>
            </div>
          ))}
        </div>
      </div>
      <div className="flex h-[53px] items-end overflow-hidden pr-[7px] pl-[30px] text-[17.5px] font-medium text-black">
        <div className="flex h-[31px] w-full items-center">
          BOOKMARKS (1)
          <MdHelp className="mb-px ml-[6px] size-[19px]" />
          <MdKeyboardArrowUp className="mt-[3px] ml-auto size-[30px]" />
        </div>
      </div>
    </aside>
  );
}

export default function App() {
  return (
    <div className="flex h-[890px] w-full flex-col overflow-hidden bg-white font-[Roboto,sans-serif]">
      <header className="flex h-[75px] shrink-0 items-center bg-[#55072f] pr-[37px] pl-[30px] text-[20px] text-white">
        Embedding Projector
        <MdHelpOutline className="ml-auto size-[30px]" />
        <MdBugReport className="ml-5 size-[30px]" />
      </header>
      <div className="flex h-[815px]">
        <aside className="flex w-[391px] shrink-0 flex-col overflow-hidden border-r border-[#e0e0e0] bg-[#fafafa]">
          <DataPanel />
          <ProjectionPanel />
        </aside>
        <main className="relative flex min-w-0 grow flex-col overflow-hidden">
          <Toolbar />
          <Scatter />
          <MdHelpOutline className="absolute top-[111px] left-[35px] size-[30px] text-black" />
          <MetadataCard />
          <button className="absolute top-[50px] left-[1088px] flex size-[50px] items-center justify-center rounded-full bg-white pr-px pb-px text-black shadow-[0_1px_4px_rgba(0,0,0,0.4)]">
            <MdHome className="size-[28px]" />
          </button>
        </main>
        <Inspector />
      </div>
    </div>
  );
}
